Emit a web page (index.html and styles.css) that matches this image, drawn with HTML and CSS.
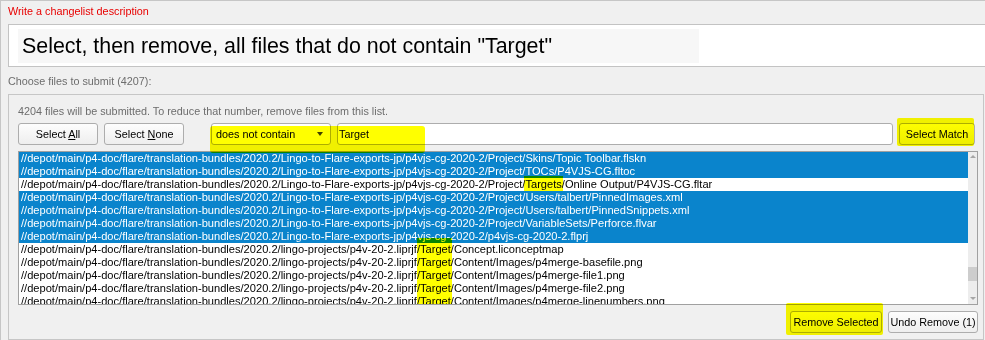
FILE: index.html
```html
<!DOCTYPE html>
<html>
<head>
<meta charset="utf-8">
<link rel="stylesheet" href="styles.css">
</head>
<body>
<div class="window">
  <div class="caption-red">Write a changelist description</div>
  <div class="desc">
    <div class="desc-text">Select, then remove, all files that do not contain "Target"</div>
  </div>
  <div class="caption">Choose files to submit (4207):</div>
  <div class="group">
    <div class="info">4204 files will be submitted. To reduce that number, remove files from this list.</div>
    <div class="toolbar">
      <button class="btn btn-select-all">Select <u>A</u>ll</button>
      <button class="btn btn-select-none">Select <u>N</u>one</button>
      <div class="combo"><span>does not contain</span><span class="combo-arrow"></span></div>
      <div class="input">Target</div>
      <button class="btn btn-match mark-btn">Select Match</button>
      <div class="mark-filter"></div>
    </div>
    <div class="list">
      <div class="rows">
        <div class="row sel">//depot/main/p4-doc/flare/translation-bundles/2020.2/Lingo-to-Flare-exports-jp/p4vjs-cg-2020-2/Project/Skins/Topic Toolbar.flskn</div>
        <div class="row sel">//depot/main/p4-doc/flare/translation-bundles/2020.2/Lingo-to-Flare-exports-jp/p4vjs-cg-2020-2/Project/TOCs/P4VJS-CG.fltoc</div>
        <div class="row">//depot/main/p4-doc/flare/translation-bundles/2020.2/Lingo-to-Flare-exports-jp/p4vjs-cg-2020-2/Project/<span class="hl hl-tall">Targets</span>/Online Output/P4VJS-CG.fltar</div>
        <div class="row sel">//depot/main/p4-doc/flare/translation-bundles/2020.2/Lingo-to-Flare-exports-jp/p4vjs-cg-2020-2/Project/Users/talbert/PinnedImages.xml</div>
        <div class="row sel">//depot/main/p4-doc/flare/translation-bundles/2020.2/Lingo-to-Flare-exports-jp/p4vjs-cg-2020-2/Project/Users/talbert/PinnedSnippets.xml</div>
        <div class="row sel">//depot/main/p4-doc/flare/translation-bundles/2020.2/Lingo-to-Flare-exports-jp/p4vjs-cg-2020-2/Project/VariableSets/Perforce.flvar</div>
        <div class="row sel">//depot/main/p4-doc/flare/translation-bundles/2020.2/Lingo-to-Flare-exports-jp/p4vjs-cg-2020-2/p4vjs-cg-2020-2.flprj</div>
        <div class="row">//depot/main/p4-doc/flare/translation-bundles/2020.2/lingo-projects/p4v-20-2.liprjf/<span class="hl hl-col hl-first">Target</span>/Concept.liconceptmap</div>
        <div class="row">//depot/main/p4-doc/flare/translation-bundles/2020.2/lingo-projects/p4v-20-2.liprjf/<span class="hl hl-col">Target</span>/Content/Images/p4merge-basefile.png</div>
        <div class="row">//depot/main/p4-doc/flare/translation-bundles/2020.2/lingo-projects/p4v-20-2.liprjf/<span class="hl hl-col">Target</span>/Content/Images/p4merge-file1.png</div>
        <div class="row">//depot/main/p4-doc/flare/translation-bundles/2020.2/lingo-projects/p4v-20-2.liprjf/<span class="hl hl-col">Target</span>/Content/Images/p4merge-file2.png</div>
        <div class="row">//depot/main/p4-doc/flare/translation-bundles/2020.2/lingo-projects/p4v-20-2.liprjf/<span class="hl hl-col">Target</span>/Content/Images/p4merge-linenumbers.png</div>
      </div>
      <div class="scrollbar">
        <span class="sb-arrow sb-up"></span>
        <div class="sb-track"><div class="sb-thumb"></div></div>
        <span class="sb-arrow sb-down"></span>
      </div>
    </div>
    <div class="footer">
      <button class="btn btn-remove mark-btn">Remove Selected</button>
      <button class="btn btn-undo">Undo Remove (1)</button>
    </div>
  </div>
</div>
</body>
</html>
```
FILE: styles.css
```css
html, body {
  margin: 0;
  padding: 0;
}

body {
  width: 985px;
  height: 340px;
  overflow: hidden;
  background: #f0f0f0;
  font-family: "Liberation Sans", Arial, sans-serif;
  font-size: 10.8px;
  color: #000;
}

.window {
  box-sizing: border-box;
  height: 340px;
  border-top: 1px solid #c6c6c6;
  border-left: 1px solid #c6c6c6;
  padding-left: 7px;
  display: flex;
  flex-direction: column;
}

.caption-red {
  margin-top: 4px;
  line-height: 13px;
  color: #e80000;
}

.desc {
  margin-top: 6px;
  height: 43px;
  box-sizing: border-box;
  border: 1px solid #c3c3c3;
  border-right: 0;
  background: #fff;
  padding: 4px 0 3px 9px;
}

.desc-text {
  box-sizing: border-box;
  width: 681px;
  height: 34px;
  padding-left: 4px;
  background: #f7f7f7;
  font-size: 21.4px;
  line-height: 34px;
  white-space: nowrap;
}

.caption {
  margin-top: 8px;
  line-height: 13px;
  color: #6d6d6d;
}

.group {
  margin-top: 6px;
  margin-right: 1px;
  flex: 1;
  border: 1px solid #c6c6c6;
  padding: 10px 5px 0 9px;
  display: flex;
  flex-direction: column;
}

.info {
  line-height: 13px;
  color: #6d6d6d;
}

.toolbar {
  position: relative;
  margin-top: 5px;
  height: 22px;
  display: flex;
  gap: 6px;
  padding-right: 3px;
}

.btn {
  position: relative;
  box-sizing: border-box;
  height: 22px;
  margin: 0;
  padding: 0;
  border: 1px solid #adadad;
  border-radius: 3px;
  background: linear-gradient(#fdfdfd, #eeeeee);
  font: inherit;
  line-height: 20px;
  color: #000;
  text-align: center;
}

.btn u {
  text-decoration-thickness: 1px;
  text-underline-offset: 1px;
}

.btn-select-all,
.btn-select-none {
  width: 80px;
}

.btn-match {
  width: 76px;
}

.combo {
  box-sizing: border-box;
  width: 120px;
  margin-left: 21px;
  padding: 0 7px 0 4px;
  display: flex;
  align-items: center;
  justify-content: space-between;
  border: 1px solid #adadad;
  border-radius: 3px;
  background: #fff;
}

.combo-arrow {
  width: 0;
  height: 0;
  border-left: 3.5px solid transparent;
  border-right: 3.5px solid transparent;
  border-top: 4px solid #404040;
}

.input {
  box-sizing: border-box;
  flex: 1;
  padding-left: 1px;
  border: 1px solid #adadad;
  border-radius: 3px;
  background: #fff;
  line-height: 20px;
}

/* yellow annotation marks */
.mark-filter {
  position: absolute;
  left: 192px;
  top: 3px;
  width: 215px;
  height: 27px;
  border-radius: 3px;
  background: #ffff00;
  mix-blend-mode: multiply;
}

.mark-btn::after {
  content: "";
  position: absolute;
  border-radius: 2px;
  background: #ffff00;
  mix-blend-mode: multiply;
}

.btn-match::after {
  top: -6px;
  left: -3px;
  right: 0;
  bottom: -2px;
}

.btn-remove::after {
  top: -9px;
  left: -5px;
  right: -2px;
  bottom: -3px;
}

.list {
  margin-top: 6px;
  height: 154px;
  box-sizing: border-box;
  border: 1px solid #a0a0a0;
  background: #fff;
  display: flex;
}

.rows {
  flex: 1;
  overflow: hidden;
  font-size: 11.1px;
}

.row {
  height: 13px;
  line-height: 13px;
  padding-left: 2px;
  white-space: nowrap;
}

.row.sel {
  background: #0a84cc;
  color: #fff;
}

.hl {
  position: relative;
  display: inline-block;
  line-height: 13px;
}

.hl::after {
  content: "";
  position: absolute;
  top: 0;
  bottom: 0;
  background: #ffff00;
  mix-blend-mode: multiply;
}

.hl-tall::after {
  top: -2px;
  left: -1px;
  right: -1px;
}

.hl-col::after {
  left: -3px;
  right: -1px;
}

.hl-first::after {
  top: -5px;
}

.scrollbar {
  width: 9px;
  background: #ededed;
  display: flex;
  flex-direction: column;
  align-items: center;
}

.sb-arrow {
  width: 0;
  height: 0;
  border-left: 3px solid transparent;
  border-right: 3px solid transparent;
}

.sb-up {
  margin-top: 3px;
  border-bottom: 3px solid #a6a6a6;
}

.sb-down {
  margin-bottom: 4px;
  border-top: 3px solid #a6a6a6;
}

.sb-track {
  flex: 1;
  align-self: stretch;
}

.sb-thumb {
  margin-top: 109px;
  height: 14px;
  background: #cdcdcd;
}

.footer {
  margin-top: 6px;
  display: flex;
  justify-content: flex-end;
  gap: 6px;
}

.btn-remove {
  width: 92px;
}

.btn-undo {
  width: 90px;
}
```
